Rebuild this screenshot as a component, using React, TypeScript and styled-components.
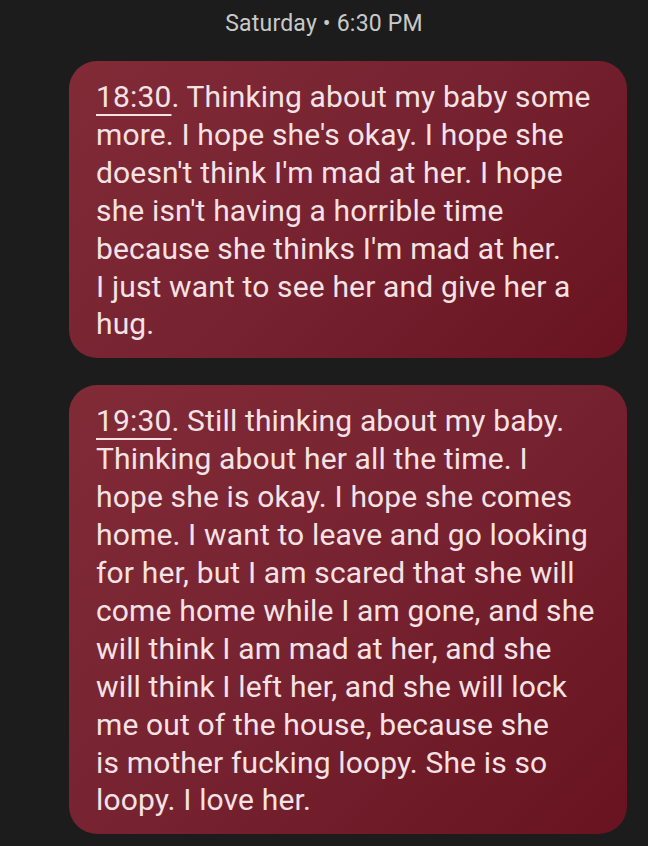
import React from "react";
import styled, { createGlobalStyle } from "styled-components";

const Global = createGlobalStyle`
  html, body {
    margin: 0;
    padding: 0;
    background: #1c1c1c;
  }
  body {
    font-family: Roboto, "Noto Sans", Arial, sans-serif;
  }
`;

const Page = styled.div`
  width: 648px;
  height: 846px;
  box-sizing: border-box;
  background: #1c1c1c;
  display: flex;
  flex-direction: column;
  align-items: stretch;
  padding: 10px 21px 0 69px;
  overflow: hidden;
`;

const DateHeader = styled.div`
  align-self: center;
  margin-left: -48px;
  font-size: 23px;
  line-height: 28px;
  color: #c9c9c9;
  letter-spacing: 0.2px;
`;

const List = styled.div`
  display: flex;
  flex-direction: column;
  gap: 27px;
  margin-top: 23px;
`;

const Bubble = styled.div`
  border-radius: 28px;
  background: linear-gradient(135deg, #812b37 0%, #772230 50%, #68131f 100%);
  padding: 17px 27px 15px 27px;
  color: #f4e2e5;
  font-size: 30px;
  line-height: 37.9px;
  letter-spacing: 0.15px;
`;

const Time = styled.span`
  text-decoration: underline;
  text-decoration-thickness: 2px;
  text-underline-offset: 7px;
`;

type Msg = { time: string; lines: string[] };

const messages: Msg[] = [
  {
    time: "18:30",
    lines: [
      ". Thinking about my baby some",
      "more. I hope she's okay. I hope she",
      "doesn't think I'm mad at her. I hope",
      "she isn't having a horrible time",
      "because she thinks I'm mad at her.",
      "I just want to see her and give her a",
      "hug.",
    ],
  },
  {
    time: "19:30",
    lines: [
      ". Still thinking about my baby.",
      "Thinking about her all the time. I",
      "hope she is okay. I hope she comes",
      "home. I want to leave and go looking",
      "for her, but I am scared that she will",
      "come home while I am gone, and she",
      "will think I am mad at her, and she",
      "will think I left her, and she will lock",
      "me out of the house, because she",
      "is mother fucking loopy. She is so",
      "loopy. I love her.",
    ],
  },
];

export default function App() {
  return (
    <>
      <Global />
      <Page>
        <DateHeader>Saturday • 6:30 PM</DateHeader>
        <List>
          {messages.map((m) => (
            <Bubble key={m.time}>
              <Time>{m.time}</Time>
              {m.lines.map((l, i) => (
                <React.Fragment key={i}>
                  {i > 0 && <br />}
                  {l}
                </React.Fragment>
              ))}
            </Bubble>
          ))}
        </List>
      </Page>
    </>
  );
}
